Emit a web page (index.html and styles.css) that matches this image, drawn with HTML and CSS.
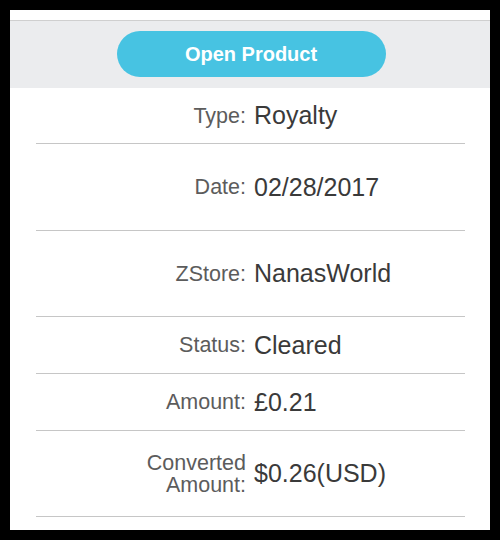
FILE: index.html
```html
<!DOCTYPE html>
<html lang="en">
<head>
  <meta charset="UTF-8" />
  <meta name="viewport" content="width=device-width, initial-scale=1.0" />
  <title>Transaction Details</title>
  <link rel="stylesheet" href="styles.css">
</head>
<body>
  <div class="panel">
    <div class="action-bar">
      <button class="open-btn">Open Product</button>
    </div>

    <div class="details">
      <div class="row first">
        <span class="label">Type:</span>
        <span class="value">Royalty</span>
      </div>
      <div class="row tall date">
        <span class="label">Date:</span>
        <span class="value">02/28/2017</span>
      </div>
      <div class="row tall">
        <span class="label">ZStore:</span>
        <span class="value">NanasWorld</span>
      </div>
      <div class="row">
        <span class="label">Status:</span>
        <span class="value">Cleared</span>
      </div>
      <div class="row">
        <span class="label">Amount:</span>
        <span class="value">£0.21</span>
      </div>
      <div class="row tall">
        <span class="label">Converted<br />Amount:</span>
        <span class="value">$0.26(USD)</span>
      </div>
    </div>
  </div>
</body>
</html>
```

FILE: styles.css
```css
:root {
  --accent: #47c3e2;
  --band: #ebecee;
  --line: #c6c6c6;
  --label: #5c5c5c;
  --value: #3a3a3a;
}

body {
  margin: 0;
  background-color: #000000;
  font-family: 'Liberation Sans', Arial, sans-serif;
}

.panel {
  margin: 10px;
  width: 480px;
  height: 520px;
  background-color: #ffffff;
  padding-top: 10px;
  box-sizing: border-box;
}

.action-bar {
  border-top: 1px solid #cfcfcf;
  background-color: var(--band);
  height: 68px;
  box-sizing: border-box;
  padding-top: 10px;
  display: flex;
  justify-content: center;
}

.open-btn {
  width: 269px;
  height: 46px;
  border: none;
  border-radius: 23px;
  background-color: var(--accent);
  color: #ffffff;
  font-family: 'Liberation Sans', Arial, sans-serif;
  font-size: 20px;
  font-weight: 700;
  margin-left: 2px;
}

.details {
  padding: 0 25px 0 26px;
}

.row {
  display: grid;
  grid-template-columns: 210px 1fr;
  column-gap: 8px;
  align-items: center;
  height: 57px;
  box-sizing: border-box;
  border-bottom: 1px solid var(--line);
}

.row.first {
  height: 56px;
}

.row.tall {
  height: 86px;
}

.row.date {
  height: 87px;
}

.label {
  text-align: right;
  font-size: 21.5px;
  line-height: 22px;
  color: var(--label);
}

.value {
  font-size: 25px;
  color: var(--value);
}
```
